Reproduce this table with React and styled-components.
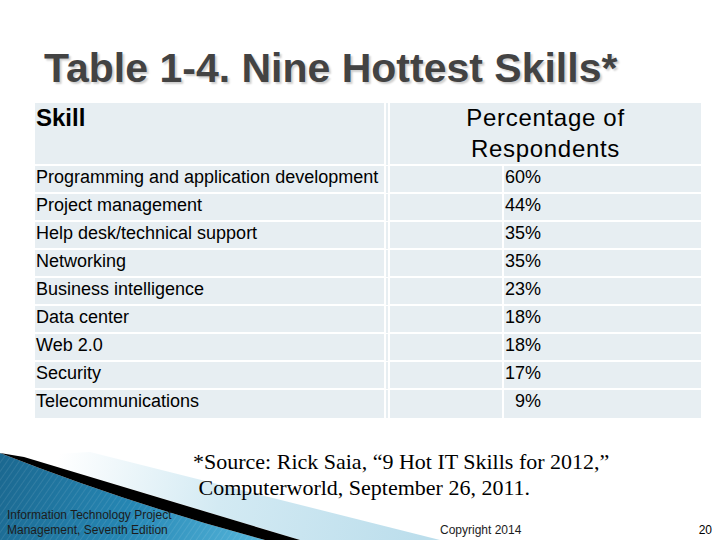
import styled, {createGlobalStyle} from 'styled-components';

const GlobalStyle = createGlobalStyle`
    html, body {
        margin: 0;
        padding: 0;
        background: #ffffff;
    }
`;

const Slide = styled.div`
    position: relative;
    width: 720px;
    height: 540px;
    overflow: hidden;
    display: flex;
    flex-direction: column;
    background: #ffffff;
    font-family: "Liberation Sans", Arial, sans-serif;
`;

const Title = styled.h1`
    margin: 44px 0 11px 44px;
    height: 48px;
    font-size: 41px;
    line-height: 48px;
    font-weight: bold;
    color: #434343;
    text-shadow: 2px 2px 2px #cfcfcf;
    white-space: nowrap;
`;

const SkillsTable = styled.table`
    margin-left: 35px;
    width: 666px;
    border-collapse: separate;
    border-spacing: 0;
    table-layout: fixed;
    color: #000000;
`;

const HeadCell = styled.th`
    height: 63px;
    padding: 0 1px;
    box-sizing: border-box;
    vertical-align: top;
    background: #e7eef2;
    border-bottom: 2px solid #ffffff;
    border-right: ${p => p.$divider ? '6px double #ffffff' : 'none'};
    font-size: 24px;
    line-height: 30.5px;
    font-weight: ${p => p.$bold ? 'bold' : 'normal'};
    letter-spacing: ${p => p.$bold ? '0' : '0.7px'};
    text-align: ${p => p.$center ? 'center' : 'left'};
`;

const Cell = styled.td`
    height: 28px;
    padding: 1px 1px 0;
    box-sizing: border-box;
    vertical-align: top;
    background: #e7eef2;
    border-bottom: ${p => p.$last ? 'none' : '2px solid #ffffff'};
    border-right: ${p => p.$divider || 'none'};
    font-size: 18px;
    line-height: 20px;
    white-space: pre;
    overflow: hidden;
`;

const Source = styled.div`
    position: relative;
    z-index: 1;
    margin: 31px 0 0 193px;
    font-family: "Liberation Serif", "Times New Roman", serif;
    font-size: 22px;
    line-height: 26px;
    color: #000000;
`;

const SourceLine = styled.div`
    white-space: pre;
`;

const Footer = styled.footer`
    position: relative;
    z-index: 1;
    margin-top: auto;
    display: flex;
    align-items: flex-end;
    padding: 0 8px 2px 7px;
    font-size: 12px;
    line-height: 15px;
    color: #1c1c1c;
`;

const BookTitle = styled.div`
    flex: 0 0 433px;
`;

const Copyright = styled.div`
    flex: 1;
`;

const PageNumber = styled.div`
    color: #000000;
`;

const Decoration = styled.svg`
    position: absolute;
    left: 0;
    bottom: 0;
    width: 720px;
    height: 100px;
    z-index: 0;
`;

const rows = [
  ['Programming and application development', '60%'],
  ['Project management', '44%'],
  ['Help desk/technical support', '35%'],
  ['Networking', '35%'],
  ['Business intelligence', '23%'],
  ['Data center', '18%'],
  ['Web 2.0', '18%'],
  ['Security', '17%'],
  ['Telecommunications', '  9%'],
];

function Swoosh() {
  return (
    <Decoration viewBox="0 440 720 100" preserveAspectRatio="none">
      <defs>
        <linearGradient id="pale" x1="60" y1="450" x2="420" y2="540" gradientUnits="userSpaceOnUse">
          <stop offset="0" stopColor="#ffffff"/>
          <stop offset="0.45" stopColor="#d3eaf3"/>
          <stop offset="1" stopColor="#bcdeec"/>
        </linearGradient>
        <linearGradient id="blue" x1="0" y1="460" x2="270" y2="540" gradientUnits="userSpaceOnUse">
          <stop offset="0" stopColor="#1b6890"/>
          <stop offset="0.5" stopColor="#2687b4"/>
          <stop offset="1" stopColor="#58b8dd"/>
        </linearGradient>
        <pattern id="lines" width="5" height="5" patternUnits="userSpaceOnUse" patternTransform="rotate(35)">
          <rect width="1" height="5" fill="#ffffff" opacity="0.09"/>
        </pattern>
      </defs>
      <path d="M90,452 L440,540 L300,540 L22,456 Z" fill="url(#pale)"/>
      <path d="M0,453 Q130,504 265,540 L0,540 Z" fill="url(#blue)"/>
      <path d="M0,453 Q130,504 265,540 L0,540 Z" fill="url(#lines)"/>
      <path d="M24,457 L300,540 L265,540 Q130,504 0,453 Z" fill="#000000"/>
    </Decoration>
  );
}

export default function App() {
  return (
    <>
      <GlobalStyle/>
      <Slide>
        <Swoosh/>
        <Title>Table 1-4. Nine Hottest Skills*</Title>

        <SkillsTable>
          <colgroup>
            <col style={{width: 355}}/>
            <col style={{width: 114}}/>
            <col style={{width: 197}}/>
          </colgroup>
          <thead>
            <tr>
              <HeadCell $bold $divider>Skill</HeadCell>
              <HeadCell colSpan={2} $center>Percentage of<br/>Respondents</HeadCell>
            </tr>
          </thead>
          <tbody>
            {rows.map(([skill, pct], i) => (
              <tr key={skill}>
                <Cell $last={i === rows.length - 1} $divider="6px double #ffffff">{skill}</Cell>
                <Cell $last={i === rows.length - 1} $divider="2px solid #ffffff"/>
                <Cell $last={i === rows.length - 1}>{pct}</Cell>
              </tr>
            ))}
          </tbody>
        </SkillsTable>

        <Source>
          <SourceLine>*Source: Rick Saia, “9 Hot IT Skills for 2012,”</SourceLine>
          <SourceLine> Computerworld, September 26, 2011.</SourceLine>
        </Source>

        <Footer>
          <BookTitle>Information Technology Project<br/>Management, Seventh Edition</BookTitle>
          <Copyright>Copyright 2014</Copyright>
          <PageNumber>20</PageNumber>
        </Footer>
      </Slide>
    </>
  );
}
